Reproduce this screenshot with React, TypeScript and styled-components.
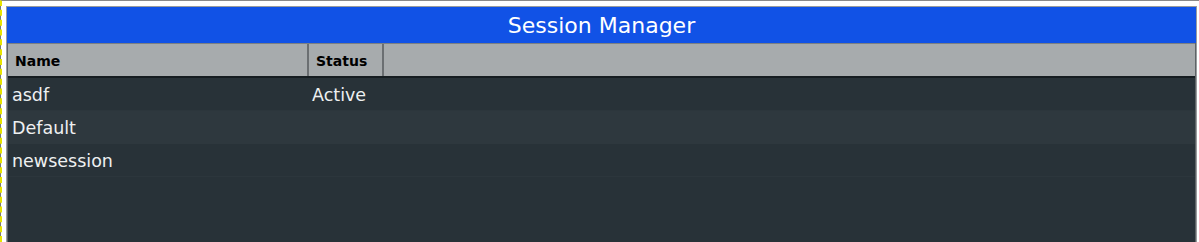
import React from "react";
import styled, { createGlobalStyle } from "styled-components";

const GlobalStyle = createGlobalStyle`
  html, body {
    margin: 0;
    padding: 0;
    background: #ffffff;
    overflow: hidden;
  }
  body {
    font-family: "DejaVu Sans", Verdana, sans-serif;
  }
  * { box-sizing: border-box; }
`;

const Frame = styled.div`
  height: 242px;
  border-top: 1px solid #8a8a8a;
  border-left: 2px dashed #e8e400;
  background: linear-gradient(#7a7a7a, #7a7a7a) left top / 1px 100% no-repeat, #ffffff;
  background-origin: border-box;
  padding: 5px 2px 0 4px;
  display: flex;
  overflow: hidden;
`;

const Panel = styled.div`
  flex: 1;
  height: 260px;
  border: 1px solid #999c9e;
  display: flex;
  flex-direction: column;
  background: #283238;
`;

const TitleBar = styled.div`
  height: 36px;
  background: #1152e6;
  color: #ffffff;
  font-size: 22px;
  display: flex;
  align-items: center;
  justify-content: center;
  padding-top: 1px;
`;

const Table = styled.div`
  flex: 1;
  display: flex;
  flex-direction: column;
  border-left: 1px solid #5e6366;
  border-right: 1px solid #5e6366;
`;

const HeaderRow = styled.div`
  display: grid;
  grid-template-columns: 301px 75px 1fr;
  height: 35px;
  background: #a7abad;
  border-top: 1px solid #7c8083;
  border-bottom: 2px solid #161d21;
`;

const HeaderCell = styled.div<{ $last?: boolean }>`
  display: flex;
  align-items: center;
  padding-left: 7px;
  padding-top: 1px;
  font-size: 14px;
  font-weight: bold;
  color: #000000;
  border-right: ${(p) => (p.$last ? "none" : "2px solid #6b6f72")};
`;

const Row = styled.div<{ $alt?: boolean }>`
  display: grid;
  grid-template-columns: 300px 75px 1fr;
  height: 33px;
  background: ${(p) => (p.$alt ? "#2e383e" : "#283238")};
  border-bottom: 1px solid ${(p) => (p.$alt ? "#2e383e" : "#2c363c")};
`;

const Cell = styled.div`
  display: flex;
  align-items: center;
  padding-left: 4px;
  padding-top: 1px;
  font-size: 17.5px;
  color: #eef0f1;
  white-space: nowrap;
`;

const sessions = [
  { name: "asdf", status: "Active" },
  { name: "Default", status: "" },
  { name: "newsession", status: "" },
];

export default function App() {
  return (
    <>
      <GlobalStyle />
      <Frame>
        <Panel>
          <TitleBar>Session Manager</TitleBar>
          <Table>
            <HeaderRow>
              <HeaderCell>Name</HeaderCell>
              <HeaderCell>Status</HeaderCell>
              <HeaderCell $last />
            </HeaderRow>
            {sessions.map((s, i) => (
              <Row key={s.name} $alt={i % 2 === 1}>
                <Cell>{s.name}</Cell>
                <Cell>{s.status}</Cell>
                <Cell />
              </Row>
            ))}
          </Table>
        </Panel>
      </Frame>
    </>
  );
}
